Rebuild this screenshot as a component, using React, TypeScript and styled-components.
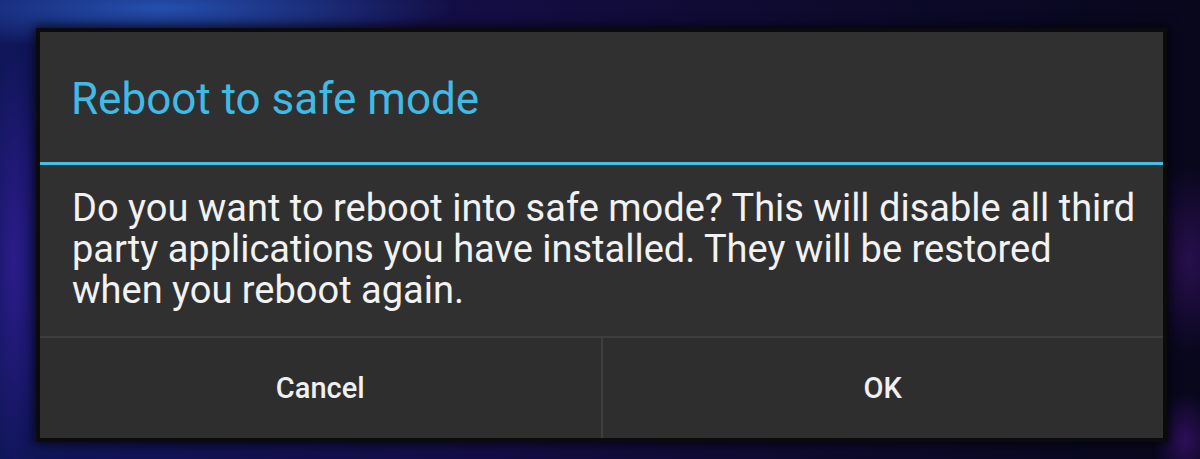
import React from 'react';
import styled, { createGlobalStyle } from 'styled-components';

const GlobalStyle = createGlobalStyle`
  html, body {
    margin: 0;
    padding: 0;
    background: #07061a;
  }
  body {
    font-family: Roboto, "Noto Sans", "Liberation Sans", sans-serif;
  }
`;

const Screen = styled.div`
  width: 1200px;
  height: 459px;
  box-sizing: border-box;
  padding: 32px 37px 21px 40px;
  overflow: hidden;
  background:
    radial-gradient(ellipse 420px 60px at 160px 8px, rgba(40, 90, 190, 0.85), transparent 70%),
    radial-gradient(ellipse 40px 260px at 14px 260px, rgba(50, 30, 150, 0.8), transparent 80%),
    radial-gradient(ellipse 60px 120px at 1190px 260px, rgba(60, 20, 110, 0.6), transparent 80%),
    radial-gradient(ellipse 40px 60px at 1185px 440px, rgba(70, 20, 130, 0.6), transparent 80%),
    linear-gradient(90deg, #10165a 0%, #140d44 40%, #0d0a2c 70%, #08071c 100%);
`;

const Dialog = styled.div`
  width: 1123px;
  height: 406px;
  display: flex;
  flex-direction: column;
  background: #303030;
  box-shadow: 0 0 0 4px #0b0b0e, 0 0 10px 6px rgba(0, 0, 0, 0.7);
`;

const TitleBar = styled.div`
  height: 133px;
  display: flex;
  align-items: center;
  padding: 4px 0 0 31px;
  box-sizing: border-box;
  border-bottom: 3px solid #45bfe6;
`;

const Title = styled.h1`
  margin: 0;
  font-size: 44px;
  font-weight: 400;
  color: #3fbbe6;
`;

const Message = styled.div`
  flex: 1;
  padding: 23px 10px 0 32px;
  font-size: 38px;
  line-height: 41px;
  color: #f2f2f2;
  white-space: nowrap;
`;

const ButtonBar = styled.div`
  height: 100px;
  display: flex;
  border-top: 2px solid #3e3e3e;
  background: #2e2e2e;
`;

const DialogButton = styled.button<{ $divider?: boolean }>`
  flex: 1;
  border: none;
  background: transparent;
  color: #f0f0f0;
  font-family: inherit;
  font-size: 29px;
  font-weight: 500;
  padding: 0;
  border-left: ${(p) => (p.$divider ? '2px solid #3e3e3e' : 'none')};
  cursor: pointer;
`;

export default function App() {
  return (
    <>
      <GlobalStyle />
      <Screen>
        <Dialog>
          <TitleBar>
            <Title>Reboot to safe mode</Title>
          </TitleBar>
          <Message>
            Do you want to reboot into safe mode? This will disable all third
            <br />
            party applications you have installed. They will be restored
            <br />
            when you reboot again.
          </Message>
          <ButtonBar>
            <DialogButton>Cancel</DialogButton>
            <DialogButton $divider>OK</DialogButton>
          </ButtonBar>
        </Dialog>
      </Screen>
    </>
  );
}
